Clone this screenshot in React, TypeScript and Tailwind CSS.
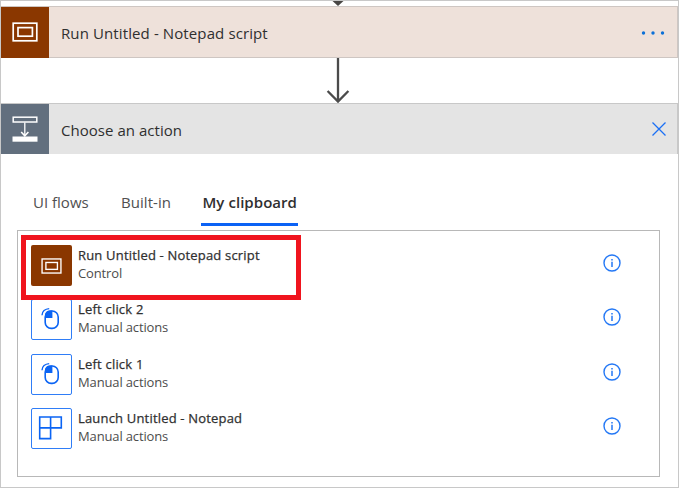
import React from "react";

function ControlIcon({ className }: { className: string }) {
  return (
    <svg className={className} viewBox="0 0 26 20" fill="none" stroke="#fff">
      <rect x="1.2" y="1.2" width="23.6" height="17.6" strokeWidth="1.7" />
      <rect x="6" y="5.6" width="14.4" height="8.6" strokeWidth="1.7" />
    </svg>
  );
}

function InsertIcon() {
  return (
    <svg className="h-[26px] w-[26px]" viewBox="0 0 26 26" fill="none" stroke="#fff">
      <rect x="1.2" y="1.2" width="23.6" height="4.8" strokeWidth="1.5" />
      <path d="M12.8 6.5V19.5" strokeWidth="1.3" />
      <path d="M9.2 16l3.6 3.8L16.4 16" strokeWidth="1.6" />
      <rect x="0.5" y="20.5" width="25" height="5.2" fill="#fff" stroke="none" />
    </svg>
  );
}

function MouseIcon() {
  return (
    <svg className="h-[39px] w-[39px] -translate-x-px" viewBox="0 0 39 39" fill="none" stroke="#0b64f4">
      <path d="M14 18V14Q15.5 10.6 18.5 10.6H21.4V18H14Z" fill="#0b64f4" stroke="none" />
      <rect x="14.2" y="11" width="13" height="17.4" rx="6" strokeWidth="1.6" />
      <path d="M11 15.2C11.2 11.6 14 8.8 18.2 8.6" strokeWidth="1.4" />
    </svg>
  );
}

function TilesIcon() {
  return (
    <svg className="h-[39px] w-[39px]" viewBox="0 0 39 39" fill="none" stroke="#0b64f4" strokeWidth="1.6">
      <path d="M7.7 8H29.3V18.9H7.7ZM18.6 8V29.6H7.7V8" />
    </svg>
  );
}

function InfoIcon() {
  return (
    <svg className="h-[18px] w-[18px]" viewBox="0 0 18 18" fill="none" stroke="#2478f5">
      <circle cx="9" cy="9" r="8" strokeWidth="1.4" />
      <path d="M9 7.7V13.1M9 5V6.4" strokeWidth="1.5" />
    </svg>
  );
}

const rows = [
  { title: "Run Untitled - Notepad script", sub: "Control", kind: "control", track: "tracking-[0.18px]" },
  { title: "Left click 2", sub: "Manual actions", kind: "mouse", track: "tracking-[0.2px]" },
  { title: "Left click 1", sub: "Manual actions", kind: "mouse", track: "tracking-[0.2px]" },
  { title: "Launch Untitled - Notepad", sub: "Manual actions", kind: "tiles", track: "tracking-[0.18px]" },
];

export default function App() {
  return (
    <div className="relative flex h-[488px] w-[679px] flex-col overflow-hidden border border-[#c8c8c8] bg-white font-['Open_Sans','Noto_Sans',sans-serif] text-[#2f2f2f]">
      <div className="flex h-[5px] justify-center pr-[3px]">
        <svg className="h-[5px] w-[12px]" viewBox="0 0 12 5">
          <path d="M0.5 0H11.5L6 5Z" fill="#484644" />
        </svg>
      </div>

      <div className="flex h-[52px] shrink-0 items-center border-y border-r border-[#cec6c2] bg-[#eee1da]">
        <div className="-my-px flex h-[51px] w-12 items-center justify-center bg-[#8a3700]">
          <ControlIcon className="h-5 w-[26px]" />
        </div>
        <span className="ml-[12px] whitespace-pre pt-[2px] text-[15px] tracking-[0.11px]">Run Untitled - Notepad script</span>
        <svg className="ml-auto mr-[12px] mt-[2px] h-1 w-6" viewBox="0 0 24 4" fill="#0b70d8">
          <circle cx="2.5" cy="2" r="1.7" />
          <circle cx="12" cy="2" r="1.7" />
          <circle cx="21.5" cy="2" r="1.7" />
        </svg>
      </div>

      <div className="flex h-[45px] shrink-0 justify-center pr-[3px]">
        <svg className="h-[45px] w-6" viewBox="0 0 24 45" fill="none" stroke="#4b4b4b" strokeWidth="2.3">
          <path d="M12 0V43.5M1.6 33L12 43.6L22.4 33" />
        </svg>
      </div>

      <div className="flex h-[51px] shrink-0 items-center border-r border-t border-[#c8c8c8] bg-[#e4e4e4]">
        <div className="flex h-[50px] w-12 items-center justify-center bg-[#626f7e]">
          <InsertIcon />
        </div>
        <span className="ml-[12px] whitespace-pre pt-[2px] text-[15px] tracking-[0.04px]">Choose an action</span>
        <svg className="ml-auto mr-[11px] h-[14px] w-[14px]" viewBox="0 0 14 14" fill="none" stroke="#1b70f5" strokeWidth="1.3">
          <path d="M0.5 0.5L13.5 13.5M13.5 0.5L0.5 13.5" />
        </svg>
      </div>

      <div className="ml-[30px] mt-[35px] flex h-[37px] shrink-0 gap-[28px] text-[15px]">
        <div className="w-[60px] whitespace-nowrap px-[2px] pt-[2px] tracking-[0px] text-[#505050]">UI flows</div>
        <div className="w-[54px] whitespace-nowrap px-[2px] pt-[2px] tracking-[0.05px] text-[#505050]">Built-in</div>
        <div className="w-[97px] whitespace-nowrap border-b-[3px] border-[#0b62f5] px-[1.5px] pt-[2px] font-semibold tracking-[0.05px]">My clipboard</div>
      </div>

      <div className="ml-4 mt-[4px] flex h-[247px] w-[643px] shrink-0 flex-col gap-[13.4px] border border-[#b8b8b8] pl-[13px] pt-[14px]">
        {rows.map((r) => (
          <div key={r.title} className="flex h-[41px] shrink-0 items-center">
            <div
              className={
                r.kind === "control"
                  ? "flex h-[41px] w-[41px] items-center justify-center rounded-[2px] bg-[#8a3700]"
                  : "flex h-[41px] w-[41px] items-center justify-center rounded-[2px] border border-[#2f7df7]"
              }
            >
              {r.kind === "control" && <ControlIcon className="h-4 w-[21px]" />}
              {r.kind === "mouse" && <MouseIcon />}
              {r.kind === "tiles" && <TilesIcon />}
            </div>
            <div className="-mt-[3px] ml-[6px] whitespace-pre text-[13px] leading-[18px]">
              <div className={"[-webkit-text-stroke:0.25px_#333] " + r.track}>{r.title}</div>
              <div className="tracking-[-0.14px] text-[#4c4c4c]">{r.sub}</div>
            </div>
            <div className="-mt-[5px] ml-auto mr-[38px]">
              <InfoIcon />
            </div>
          </div>
        ))}
      </div>

      <div className="absolute left-[20px] top-[234px] h-[65px] w-[280px] border-[5px] border-[#f0141e]" />
    </div>
  );
}
